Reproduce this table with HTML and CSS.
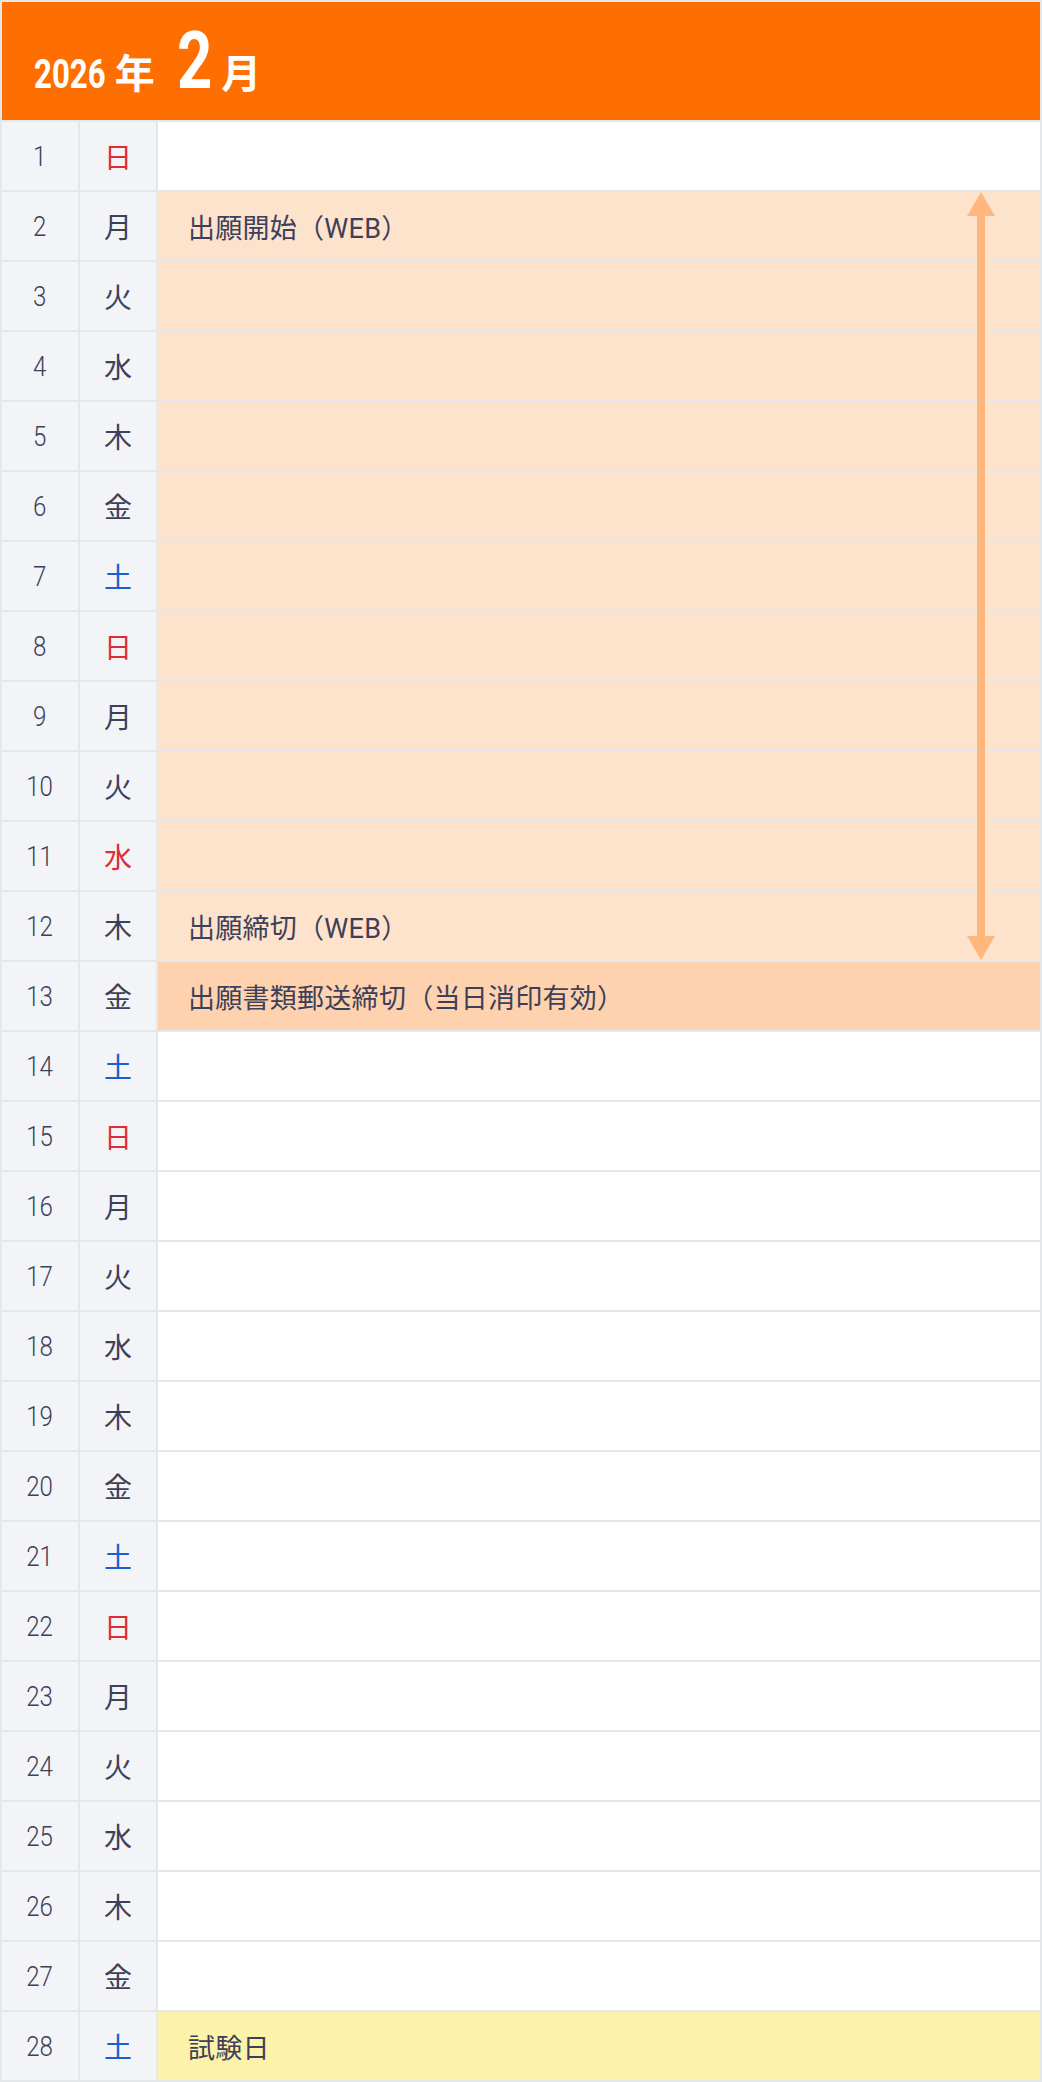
FILE: index.html
```html
<!DOCTYPE html>
<html lang="ja">
<head>
    <meta charset="UTF-8">
    <meta name="viewport" content="width=device-width, initial-scale=1.0">
    <title>2026年2月 スケジュール</title>
    <link rel="stylesheet" href="styles.css">
</head>
<body>
    <div class="calendar" id="calendar">
        <div class="month-head">
            <span class="year">2026</span><span class="unit unit-year">年</span>
            <span class="month">2</span><span class="unit unit-month">月</span>
        </div>
        <svg class="period-arrow" width="28" height="768" viewBox="0 0 28 768">
            <rect x="10" y="20" width="8" height="728" fill="#ffb77d"/>
            <polygon points="14,0 28,24 0,24" fill="#ffb77d"/>
            <polygon points="14,768 28,744 0,744" fill="#ffb77d"/>
        </svg>
    </div>
    <script>
        const weekdays = ["日", "月", "火", "水", "木", "金", "土"];
        const holidays = [11];
        const events = {
            2: { text: "出願開始（WEB）", type: "period" },
            12: { text: "出願締切（WEB）", type: "period" },
            13: { text: "出願書類郵送締切（当日消印有効）", type: "deadline" },
            28: { text: "試験日", type: "exam" }
        };

        const calendar = document.getElementById("calendar");
        const arrow = calendar.querySelector(".period-arrow");

        for (let day = 1; day <= 28; day++) {
            const wd = (day - 1) % 7;
            let wdClass = "";
            if (wd === 0 || holidays.includes(day)) wdClass = " sun";
            else if (wd === 6) wdClass = " sat";

            let evClass = "";
            let evText = "";
            if (day >= 2 && day <= 12) evClass = " period";
            if (events[day]) {
                evText = events[day].text;
                evClass = " " + events[day].type;
            }

            calendar.insertAdjacentHTML("beforeend", `
                <div class="cell day"><span>${day}</span></div>
                <div class="cell weekday${wdClass}">${weekdays[wd]}</div>
                <div class="cell event${evClass}">${evText}</div>
            `);
        }

        // keep the arrow on top of the rows
        calendar.appendChild(arrow);
    </script>
</body>
</html>
```

FILE: styles.css
```css
body {
    margin: 0;
    font-family: "Noto Sans CJK JP", "Noto Sans", sans-serif;
    color: #3d4059;
    background: #fff;
}

.calendar {
    position: relative;
    display: grid;
    grid-template-columns: 76px 76px 1fr;
    grid-template-rows: 118px;
    grid-auto-rows: 68px;
    gap: 2px;
    padding: 2px;
    background: #e5e8eb;
}

.month-head {
    grid-column: 1 / -1;
    display: flex;
    align-items: baseline;
    padding: 20px 0 0 32px;
    box-sizing: border-box;
    background: #ff6e00;
    color: #fff;
    font-weight: 700;
    line-height: 1;
}

.month-head .year,
.month-head .month {
    display: inline-block;
    font-family: Roboto, sans-serif;
    transform: scaleX(0.78);
    transform-origin: left bottom;
}

.month-head .year {
    font-size: 40px;
    margin-right: -20px;
}

.month-head .month {
    font-size: 79px;
    margin-left: 22px;
    margin-right: -10px;
}

.month-head .unit {
    font-size: 40px;
}

.month-head .unit-year {
    margin-left: 9px;
}

.month-head .unit-month {
    margin-left: 9px;
}

.cell {
    display: flex;
    align-items: center;
    font-size: 27px;
}

.day,
.weekday {
    justify-content: center;
    background: #f2f4f7;
}

.day span {
    display: inline-block;
    font-family: Roboto, sans-serif;
    font-size: 28px;
    font-weight: 300;
    transform: scaleX(0.86);
}

.weekday {
    font-size: 28px;
}

.weekday.sun {
    color: #de2c36;
}

.weekday.sat {
    color: #1a5fcf;
}

.event {
    background: #fff;
    padding-left: 30px;
    font-family: Roboto, "Noto Sans CJK JP", sans-serif;
    letter-spacing: 0.01em;
}

.event.period {
    background: #fde2cc;
}

.event.deadline {
    background: #fed2af;
}

.event.exam {
    background: #fdf2a9;
}

.period-arrow {
    position: absolute;
    left: 967px;
    top: 192px;
}
```
